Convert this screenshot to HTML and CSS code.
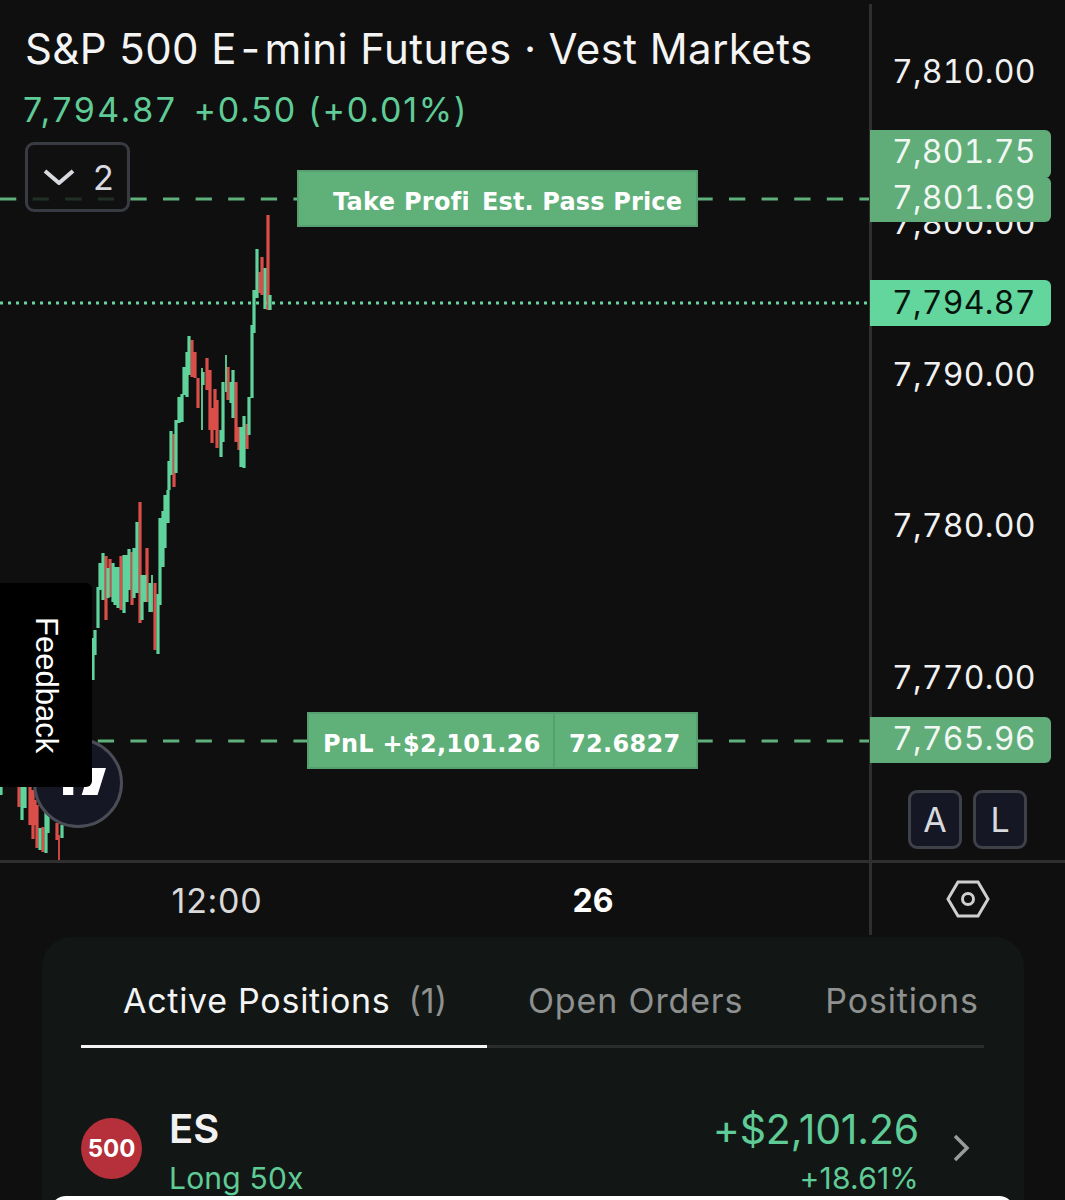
FILE: index.html
```html
<!DOCTYPE html>
<html lang="en">
<head>
<meta charset="utf-8">
<title>S&amp;P 500 E-mini Futures</title>
<link rel="stylesheet" href="styles.css">
</head>
<body>
<div class="app">
  <section class="chart-row">
    <div class="pane">
      <svg class="plot" viewBox="0 0 871 860" width="871" height="860" aria-hidden="true">
        <line class="order-line" x1="0" y1="199" x2="297" y2="199"/>
        <line class="order-line" x1="696.4" y1="199" x2="870" y2="199"/>
        <line class="order-line" x1="0" y1="741" x2="307" y2="741"/>
        <line class="order-line" x1="696.4" y1="741" x2="870" y2="741"/>
        <line class="last-line" x1="0" y1="303" x2="868" y2="303"/>
        <path class="bars red" d="M19 787V807M30 787V825M33 790V839M35 800V825M37 805V848M43 827V852M57 823V840M106 556V620M110 559V597M121 556V610M132 552V605M140 502V623M147 548V602M155 583V650M174 434V487M192 340V377M195 352V378M198 378V408M207 358V390M210 370V430M212 408V443M215 389V430M217 400V448M228 367V400M236 382V442M239 427V450M247 424V449M260 272V293M262 257V295M268 215V310"/>
        <path class="bars green" d="M1 787V795M22 787V820M25 787V808M40 828V850M46 810V853M48 815V833M62 825V838M93 638V680M95 630V655M98 587V628M100 563V590M103 553V600M108 568V598M113 563V602M115 567V605M118 567V608M124 555V613M127 555V602M129 549V590M134 548V598M137 522V593M142 575V620M145 575V602M150 583V612M158 594V654M160 518V605M163 511V567M165 495V548M168 490V523M169 461V490M171 431V475M176 420V473M179 397V423M182 394V422M184 367V395M187 352V397M189 336V375M203 372V385M221 430V457M223 382V442M231 382V403M233 370V418M241 427V467M244 416V468M249 397V435M252 325V398M254 290V333M257 249V298M265 268V309M270 295V310"/>
        <path class="wicks green" d="M152 575V612M202 368V430M226 355V392"/>
        <path class="wicks red" d="M59 835V860"/>
      </svg>

      <header class="legend">
        <h1 class="legend-title">S&amp;P 500 E<span class="hyphen">-</span>mini Futures · Vest Markets</h1>
        <p class="legend-values"><span class="legend-last">7,794.87</span><span class="legend-change">+0.50 (+0.01%)</span></p>
        <div class="collapse">
          <svg class="collapse-icon" viewBox="0 0 32 16" width="32" height="16" aria-hidden="true"><path d="M2 2l14 12L30 2"/></svg>
          <span>2</span>
        </div>
      </header>

      <div class="order order-tp">
        <div class="order-cell order-cell-clip"><span>Take Profit</span></div>
        <div class="order-cell order-cell-pass"><span>Est. Pass Price</span></div>
      </div>
      <div class="order order-pnl">
        <div class="order-cell order-cell-pnl"><span>PnL +$2,101.26</span></div>
        <div class="order-cell order-cell-qty"><span>72.6827</span></div>
      </div>

      <div class="logo-badge">
        <svg viewBox="0 0 89 89" width="83" height="83" aria-hidden="true"><path d="M29 40h11v18H29zM58 29h17l-9 29H49z"/></svg>
      </div>
      <aside class="feedback"><span>Feedback</span></aside>
    </div>

    <div class="price-axis">
      <span class="tick" style="top:45px">7,810.00</span>
      <span class="tick" style="top:196px">7,800.00</span>
      <span class="tick" style="top:348px">7,790.00</span>
      <span class="tick" style="top:499px">7,780.00</span>
      <span class="tick" style="top:651px">7,770.00</span>
      <span class="tag tag-order tag-a" style="top:126px">7,801.75</span>
      <span class="tag tag-order tag-b" style="top:173px">7,801.69</span>
      <span class="tag tag-last" style="top:276px">7,794.87</span>
      <span class="tag tag-order tag-c" style="top:713px">7,765.96</span>
      <div class="scale-buttons">
        <button class="scale-btn">A</button>
        <button class="scale-btn">L</button>
      </div>
    </div>
  </section>

  <section class="time-row">
    <div class="time-axis">
      <span class="time-label time-noon">12:00</span>
      <span class="time-label time-day">26</span>
    </div>
    <div class="time-corner">
      <svg viewBox="0 0 44 38" width="44" height="38" aria-hidden="true"><path d="M2 19L12 2h20l10 17-10 17H12z"/><circle cx="22" cy="19" r="5.5"/></svg>
    </div>
  </section>

  <section class="panel">
    <nav class="tabs">
      <div class="tab tab-active">Active Positions<span class="tab-count">(1)</span></div>
      <div class="tab tab-orders">Open Orders</div>
      <div class="tab tab-positions">Positions</div>
    </nav>
    <div class="position">
      <div class="symbol-icon">500</div>
      <div class="position-name">
        <div class="ticker">ES</div>
        <div class="side">Long 50x</div>
      </div>
      <div class="position-pnl">
        <div class="pnl-value">+$2,101.26</div>
        <div class="pnl-pct">+18.61%</div>
      </div>
      <svg class="row-chevron" viewBox="0 0 18 28" width="18" height="28" aria-hidden="true"><path d="M3 2l12 12L3 26"/></svg>
    </div>
    <div class="sheet-edge"></div>
  </section>
</div>
</body>
</html>
```
FILE: styles.css
```css
* { box-sizing: border-box; }
html, body { margin: 0; padding: 0; }
body {
  width: 1065px;
  height: 1200px;
  overflow: hidden;
  background: #0f0f10;
  color: #f2f2f2;
  font-family: Inter, "Liberation Sans", sans-serif;
}
.app { display: flex; flex-direction: column; height: 1200px; }

/* chart */
.chart-row { display: flex; height: 860px; flex: none; }
.pane { position: relative; width: 871px; height: 860px; flex: none; overflow: hidden; }
.plot { position: absolute; left: 0; top: 0; display: block; }
.order-line { stroke: #5fb07a; stroke-width: 3; stroke-dasharray: 16.3 16.3; }
.last-line { stroke: #62d69c; stroke-width: 3; stroke-dasharray: 3 5; }
.bars, .wicks { fill: none; }
.bars { stroke-width: 3.2; }
.wicks { stroke-width: 1.8; }
.green { stroke: #5fd39b; }
.red { stroke: #d94e48; }

.legend { position: absolute; left: 25px; top: 24px; }
.legend-title {
  margin: 0;
  font-size: 42px;
  line-height: 50px;
  font-weight: 400;
  letter-spacing: 0.4px;
  white-space: nowrap;
  color: #f4f4f4;
}
.hyphen { margin: 0 4px; }
.legend-values {
  display: flex;
  gap: 16px;
  margin: 11px 0 0 -2px;
  font-size: 34px;
  line-height: 50px;
  color: #5fcb96;
  white-space: nowrap;
}
.legend-last { letter-spacing: 2.5px; }
.legend-change { letter-spacing: 1.8px; }
.collapse {
  display: flex;
  align-items: center;
  gap: 18px;
  width: 105px;
  height: 70px;
  margin-top: 7px;
  padding-left: 15px;
  border: 3px solid #393b43;
  border-radius: 9px;
  background: rgba(16, 16, 17, 0.8);
  color: #d9dae0;
  font-size: 34px;
}
.collapse-icon path { fill: none; stroke: #d9dae0; stroke-width: 4; }

.order {
  position: absolute;
  display: flex;
  color: #fff;
  font-family: "DejaVu Sans", sans-serif;
  font-weight: 700;
  font-size: 24px;
  letter-spacing: 0.3px;
  white-space: nowrap;
}
.order-tp { left: 297px; top: 170px; width: 401px; height: 57px; }
.order-pnl { left: 307px; top: 712px; width: 391px; height: 57px; }
.order-cell {
  display: flex;
  align-items: center;
  height: 100%;
  padding-top: 6px;
  background: #60b07a;
  border: 2px solid #569f6e;
  overflow: hidden;
}
.order-cell-clip { width: 171px; padding-left: 34px; border-right: 0; }
.order-cell-clip span { margin-right: -40px; }
.order-cell-pass { width: 230px; padding-left: 14px; border-left: 0; letter-spacing: 0.15px; }
.order-cell-pnl { width: 248px; padding-left: 14px; }
.order-cell-qty { width: 143px; padding-left: 14px; border-left: 0; }

.logo-badge {
  position: absolute;
  left: 33px;
  top: 738px;
  width: 90px;
  height: 90px;
  border: 3px solid #4b4d56;
  border-radius: 50%;
  background: #151824;
}
.logo-badge svg { display: block; }
.logo-badge path { fill: #fff; }

.feedback {
  position: absolute;
  left: 0;
  top: 583px;
  width: 92px;
  height: 204px;
  display: flex;
  align-items: center;
  justify-content: center;
  background: #000;
  border-radius: 0 6px 6px 0;
}
.feedback span {
  writing-mode: vertical-rl;
  font-family: "Liberation Sans", Arial, sans-serif;
  font-size: 31px;
  color: #fff;
}

/* price axis */
.price-axis {
  position: relative;
  flex: 1;
  margin-top: 4px;
  margin-left: -2px;
  border-left: 3px solid #2f2f2f;
}
.tick, .tag {
  position: absolute;
  height: 46px;
  line-height: 46px;
  font-size: 32px;
  letter-spacing: 0.25px;
  font-feature-settings: "tnum";
  white-space: nowrap;
}
.tick { left: 20px; color: #f1f1f1; }
.tag {
  left: -2px;
  width: 181px;
  padding-left: 22px;
  border-radius: 0 6px 6px 0;
}
.tag-order { background: #60ad79; color: #f1f8f3; }
.tag-last { background: #62d69c; color: #06130c; line-height: 46px; }
.tag-a { height: 48px; line-height: 44px; }
.tag-b { height: 45px; line-height: 42px; }
.tag-c { line-height: 44px; }
.scale-buttons {
  position: absolute;
  left: 36px;
  top: 786px;
  display: flex;
  gap: 11px;
}
.scale-btn {
  width: 54px;
  height: 59px;
  padding: 0;
  border: 3px solid #3f4149;
  border-radius: 9px;
  background: #151824;
  color: #d8d9de;
  font: 400 34px Inter, sans-serif;
}

/* time axis */
.time-row { display: flex; height: 77px; flex: none; border-top: 3px solid #2f2f2f; }
.time-axis { position: relative; width: 869px; flex: none; }
.time-label { position: absolute; top: 18px; transform: translateX(-50%); font-size: 32px; line-height: 40px; }
.time-noon { left: 217px; font-size: 34px; letter-spacing: 0.7px; color: #d9d9d9; }
.time-day { left: 593px; font-weight: 700; color: #fff; }
.time-corner {
  flex: 1;
  display: flex;
  justify-content: center;
  align-items: center;
  padding-right: 1px;
  border-left: 3px solid #2f2f2f;
  height: 72px;
}
.time-corner path, .time-corner circle { fill: none; stroke: #cfcfcf; stroke-width: 3; }

/* panel */
.panel {
  position: relative;
  flex: 1;
  margin: 0 41px 0 42px;
  padding: 0 40px 0 39px;
  background: #121715;
  border-radius: 30px 30px 0 0;
  overflow: hidden;
}
.tabs {
  display: flex;
  height: 111px;
  border-bottom: 3px solid #2a2d2b;
  font-size: 34px;
  letter-spacing: 0.85px;
  white-space: nowrap;
}
.tab { height: 111px; padding-top: 42px; line-height: 44px; color: #8f9190; }
.tab-active {
  width: 406px;
  flex: none;
  padding-left: 42px;
  letter-spacing: 0.72px;
  color: #f4f4f4;
  border-bottom: 3px solid #f4f4f4;
}
.tab-count { margin-left: 18px; letter-spacing: 0; color: #8f9190; }
.tab-orders { margin-left: 41px; }
.tab-positions { margin-left: 82px; }

.position { position: relative; display: flex; align-items: flex-start; padding-top: 60px; }
.symbol-icon {
  width: 61px;
  height: 61px;
  margin-top: 10px;
  flex: none;
  display: flex;
  align-items: center;
  justify-content: center;
  border-radius: 50%;
  background: #b5303a;
  color: #fff;
  font-weight: 700;
  font-size: 24px;
}
.position-name { margin-left: 27px; }
.ticker { font-size: 40px; font-weight: 600; line-height: 50px; margin-top: -4px; color: #f2f2f2; }
.side { font-size: 30px; line-height: 44px; margin-top: 2px; letter-spacing: 0.2px; color: #5fcb96; }
.position-pnl { margin-left: auto; margin-right: 65px; text-align: right; color: #5fcb96; }
.pnl-value { font-size: 41px; line-height: 50px; margin-top: -4px; letter-spacing: -0.2px; }
.pnl-pct { font-size: 30px; line-height: 44px; margin-top: 2px; letter-spacing: 0.2px; }
.row-chevron { position: absolute; right: 14px; top: 86px; }
.row-chevron path { fill: none; stroke: #9a9b9b; stroke-width: 3.5; }

.sheet-edge {
  position: absolute;
  left: 8px;
  top: 259px;
  width: 965px;
  height: 20px;
  background: #fff;
  border-radius: 16px 16px 0 0;
}
```
